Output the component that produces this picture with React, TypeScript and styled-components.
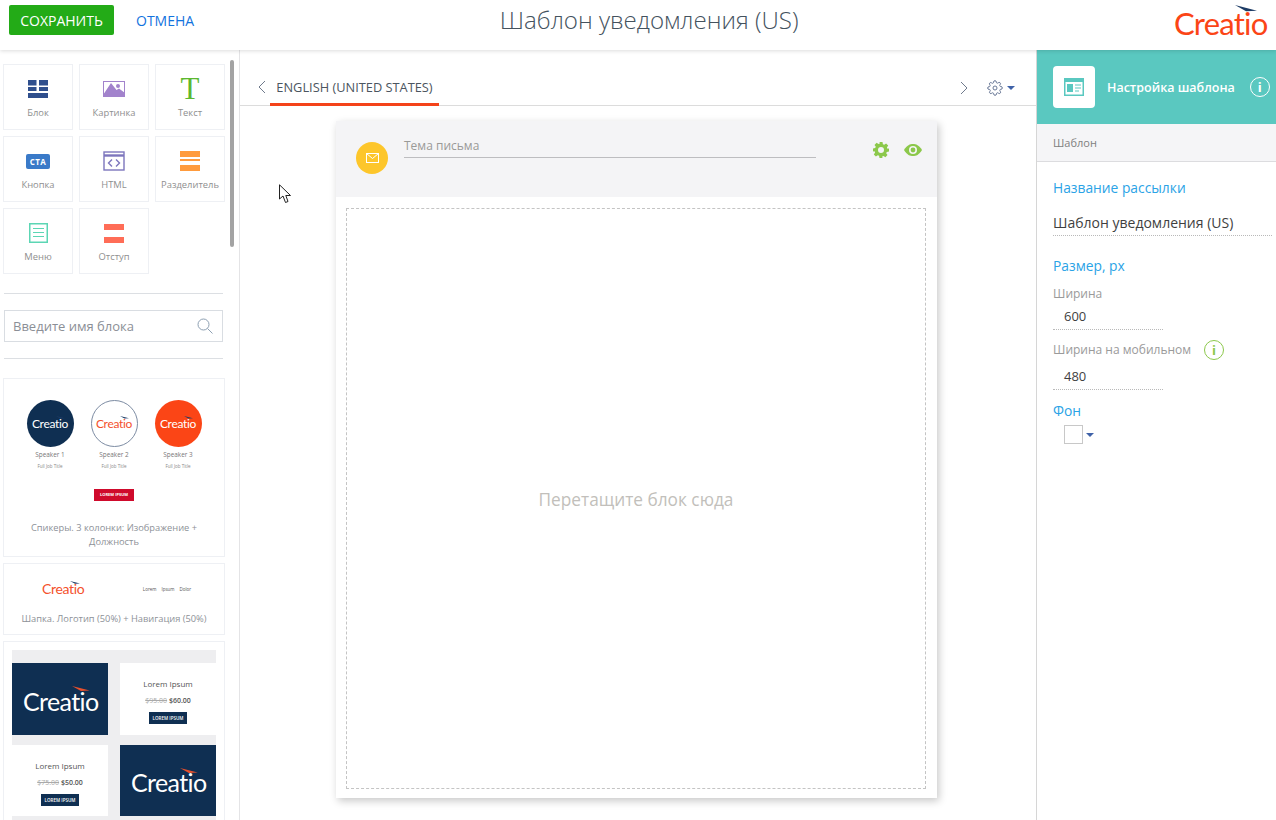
import React from 'react';
import styled, { createGlobalStyle } from 'styled-components';

const Global = createGlobalStyle`
  html, body { margin: 0; padding: 0; height: 820px; overflow: hidden; background: #fff; }
  body { font-family: "Open Sans", "Liberation Sans", sans-serif; }
  * { box-sizing: border-box; }
`;

const Page = styled.div`
  position: relative;
  width: 1276px;
  height: 820px;
  overflow: hidden;
  display: flex;
  flex-direction: column;
`;
const Header = styled.header`
  height: 50px;
  flex: none;
  display: flex;
  align-items: flex-start;
  position: relative;
  z-index: 2;
  background: #fff;
  box-shadow: 0 1px 4px rgba(0, 0, 0, 0.14);
  padding: 5px 10px 0 9px;
`;
const SaveButton = styled.button`
  width: 105px;
  height: 30px;
  border: 0;
  border-radius: 2px;
  background: #23ab17;
  color: #fff;
  font: 400 14px "Open Sans", sans-serif;
  padding: 0;
`;
const CancelButton = styled.button`
  margin-left: 22px;
  height: 30px;
  border: 0;
  background: none;
  color: #1273de;
  font: 400 14px "Open Sans", sans-serif;
  padding: 0;
`;
const Title = styled.h1`
  margin: 0;
  width: 910px;
  text-align: center;
  height: 30px;
  font: 300 24.1px/30px "Open Sans", sans-serif;
  color: #44525e;
  white-space: nowrap;
`;
const LogoWrap = styled.div`
  margin-left: auto;
  margin-top: 1px;
  flex: none;
`;
const LogoBox = styled.div<{ $w: number; $size: number; $color: string }>`
  position: relative;
  display: inline-block;
  width: ${p => p.$w}px;
  color: ${p => p.$color};
  font: 400 ${p => p.$size}px/1.1 "Lato", "Open Sans", sans-serif;
  letter-spacing: -0.025em;
  text-align: center;
  white-space: nowrap;
`;
const Swoosh = styled.svg`
  position: absolute;
  left: 66%;
  top: -4%;
  width: 24%;
  height: 28%;
`;
const Logo = ({ w, size, color, swoosh = '#1d3c66' }: { w: number; size: number; color: string; swoosh?: string }) => (
  <LogoBox $w={w} $size={size} $color={color}>
    Creatio
    <Swoosh viewBox="0 0 24 10" preserveAspectRatio="none">
      <path d="M0 0 L24 6 L12 6.5 Z" fill={swoosh} />
    </Swoosh>
  </LogoBox>
);

const Body = styled.div`
  flex: 1;
  display: flex;
  min-height: 0;
`;
const Left = styled.aside`
  width: 240px;
  flex: none;
  border-right: 1px solid #e4e4e6;
  position: relative;
  overflow: hidden;
  padding: 14px 0 0 3px;
`;
const Scrollbar = styled.div`
  position: absolute;
  left: 230px;
  top: 10px;
  width: 4px;
  height: 187px;
  border-radius: 2px;
  background: #a3a3a3;
`;
const Tiles = styled.div`
  display: grid;
  grid-template-columns: repeat(3, 70px);
  grid-auto-rows: 66px;
  gap: 6px;
`;
const Tile = styled.div`
  border: 1px solid #eef0f4;
  display: flex;
  flex-direction: column;
  align-items: center;
  padding-top: 11px;
`;
const TileIcon = styled.div`
  height: 26px;
  display: flex;
  align-items: center;
  justify-content: center;
`;
const TileLabel = styled.div`
  margin-top: 4px;
  font-size: 9.4px;
  line-height: 14px;
  color: #8f8f8f;
  white-space: nowrap;
`;
const SerifT = styled.span`
  font: 400 31px/26px "Liberation Serif", serif;
  color: #5cb82f;
`;
const CtaBadge = styled.span`
  width: 24px;
  height: 15px;
  border-radius: 2px;
  background: #3a7ac8;
  color: #fff;
  font: 700 8px/15px "Open Sans", sans-serif;
  letter-spacing: 0.5px;
  text-align: center;
`;
const Rule = styled.div<{ $top: number; $bottom: number }>`
  width: 219px;
  margin: ${p => p.$top}px 0 ${p => p.$bottom}px 1px;
  height: 1px;
  background: #dcdfe3;
`;
const Search = styled.div`
  width: 219px;
  height: 32px;
  margin-left: 1px;
  border: 1px solid #d9dde2;
  display: flex;
  align-items: center;
  justify-content: space-between;
  padding: 0 9px 0 8px;
  font-size: 13px;
  color: #8b8f96;
`;
const Card = styled.div<{ $h: number }>`
  width: 222px;
  height: ${p => p.$h}px;
  border: 1px solid #eef0f4;
  margin-bottom: 6px;
  display: flex;
  flex-direction: column;
  align-items: center;
  flex: none;
`;
const Caption = styled.div<{ $mt: number }>`
  margin-top: ${p => p.$mt}px;
  font-size: 9.3px;
  line-height: 14px;
  color: #8d9197;
  text-align: center;
`;
const Speakers = styled.div`
  display: flex;
  gap: 17px;
  margin-top: 21px;
`;
const Speaker = styled.div`
  width: 47px;
  display: flex;
  flex-direction: column;
  align-items: center;
`;
const Circle = styled.div<{ $bg: string; $ring?: boolean }>`
  width: 47px;
  height: 47px;
  border-radius: 50%;
  background: ${p => p.$bg};
  border: ${p => (p.$ring ? '1px solid #7d8ca3' : '0')};
  display: flex;
  align-items: center;
  justify-content: center;
`;
const SpeakerName = styled.div`
  margin-top: 4px;
  font-size: 6.4px;
  line-height: 7px;
  font-weight: 400;
  color: #777;
  white-space: nowrap;
`;
const SpeakerRole = styled.div`
  margin-top: 5px;
  font-size: 4.5px;
  line-height: 6px;
  color: #888;
  white-space: nowrap;
`;
const RedBtn = styled.div`
  margin-top: 20px;
  width: 40px;
  height: 12px;
  background: #cf0a2c;
  color: #fff;
  font: 700 4px/12px "Open Sans", sans-serif;
  text-align: center;
  white-space: nowrap;
`;
const HeaderThumb = styled.div`
  display: flex;
  width: 100%;
  align-items: center;
  margin-top: 15px;
  height: 20px;
`;
const ThumbHalf = styled.div`
  width: 50%;
  display: flex;
  justify-content: center;
  gap: 5px;
  padding-right: 4px;
  font-size: 4.5px;
  color: #555;
`;
const ThumbHalfLogo = styled.div`
  width: 50%;
  display: flex;
  justify-content: center;
  padding-left: 8px;
`;
const Promo = styled.div`
  width: 204px;
  background: #eeeef0;
  margin-top: 8px;
  padding: 13px 0;
  display: grid;
  grid-template-columns: 96px 96px;
  grid-auto-rows: 71.5px;
  column-gap: 12px;
  row-gap: 10px;
`;
const PromoImage = styled.div`
  background: #0f2f52;
  display: flex;
  align-items: center;
  justify-content: center;
  padding-top: 5px;
`;
const PromoText = styled.div`
  background: #fff;
  display: flex;
  flex-direction: column;
  align-items: center;
  padding-top: 15px;
`;
const PromoTitle = styled.div`
  font-size: 8px;
  line-height: 12px;
  color: #555;
`;
const PromoPrice = styled.div`
  margin-top: 6px;
  font-size: 7px;
  line-height: 10px;
  color: #555;
  font-weight: 600;
  & > s { color: #aaa; font-weight: 400; }
`;
const PromoBtn = styled.div`
  margin-top: 6px;
  width: 38px;
  height: 12px;
  background: #0f2f52;
  color: #fff;
  font: 600 4.5px/12px "Open Sans", sans-serif;
  text-align: center;
  white-space: nowrap;
`;

const Center = styled.main`
  flex: 1;
  min-width: 0;
  display: flex;
  flex-direction: column;
  align-items: flex-start;
`;
const TabBar = styled.div`
  width: 100%;
  height: 56px;
  flex: none;
  border-bottom: 1px solid #dcdcdc;
  display: flex;
  align-items: flex-end;
  padding: 0 21px 0 17px;
`;
const Chevron = styled.svg`
  flex: none;
  margin-bottom: 11px;
`;
const Tab = styled.div`
  width: 169px;
  height: 39px;
  margin: 0 0 -1px 3px;
  padding-top: 2px;
  border-bottom: 3px solid #f4431a;
  font-size: 12.8px;
  line-height: 37px;
  color: #4b5560;
  text-align: center;
  white-space: nowrap;
`;
const TabTools = styled.div`
  margin-left: auto;
  display: flex;
  align-items: center;
  margin-bottom: 9px;
`;
const ToolGap = styled.span`
  width: 18px;
`;
const Caret = styled.span<{ $ml: number }>`
  width: 0;
  height: 0;
  margin-left: ${p => p.$ml}px;
  border-left: 4.5px solid transparent;
  border-right: 4.5px solid transparent;
  border-top: 4.5px solid #3f62a8;
`;
const Sheet = styled.section`
  width: 601px;
  height: 677px;
  margin: 15px 0 0 96px;
  flex: none;
  box-shadow: 2px 3px 8px rgba(0, 0, 0, 0.22);
  background: #fff;
  display: flex;
  flex-direction: column;
`;
const SheetHead = styled.div`
  height: 76px;
  flex: none;
  background: #f4f4f6;
  display: flex;
  align-items: flex-start;
  padding: 21px 0 0 20px;
`;
const MailDot = styled.div`
  width: 32px;
  height: 32px;
  border-radius: 50%;
  background: #fdc62b;
  display: flex;
  align-items: center;
  justify-content: center;
  flex: none;
`;
const Subject = styled.div`
  width: 412px;
  height: 16px;
  margin: 0 0 0 16px;
  border-bottom: 1px solid #bdbdc0;
  font-size: 12px;
  line-height: 8px;
  color: #9a9a98;
`;
const SheetTools = styled.div`
  margin-left: 57px;
  display: flex;
  align-items: center;
  gap: 15px;
`;
const DropArea = styled.div`
  flex: 1;
  margin: 11px 11px 9px 10px;
  border: 1px dashed #c4c4c4;
  display: flex;
  align-items: center;
  justify-content: center;
  font-size: 17.25px;
  color: #c2bfbb;
  padding-top: 2px;
`;

const Right = styled.aside`
  width: 240px;
  flex: none;
  border-left: 1px solid #d6d6d6;
  display: flex;
  flex-direction: column;
`;
const PanelHead = styled.div`
  height: 74px;
  flex: none;
  background: #5ac8c0;
  display: flex;
  align-items: center;
  padding-left: 16px;
  color: #fff;
  font-size: 12.5px;
  font-weight: 600;
  white-space: nowrap;
`;
const PanelIcon = styled.div`
  width: 42px;
  height: 42px;
  border-radius: 4px;
  background: #fff;
  display: flex;
  align-items: center;
  justify-content: center;
  margin-right: 12px;
`;
const InfoRing = styled.div<{ $color: string }>`
  width: 20px;
  height: 20px;
  border-radius: 50%;
  border: 1px solid ${p => p.$color};
  color: ${p => p.$color};
  font: 700 13px/18px "Open Sans", sans-serif;
  text-align: center;
  flex: none;
`;
const HeadInfo = styled.div`
  margin-left: 15px;
`;
const SubHead = styled.div`
  height: 38px;
  flex: none;
  background: #f5f5f7;
  border-bottom: 1px solid #dcdcdf;
  padding-left: 16px;
  font-size: 11px;
  line-height: 37px;
  color: #808080;
`;
const Fields = styled.div`
  padding: 16px 0 0 16px;
  display: flex;
  flex-direction: column;
  align-items: flex-start;
`;
const Section = styled.div<{ $mt?: number }>`
  font-size: 13.8px;
  line-height: 20px;
  color: #2aa3e6;
  margin-top: ${p => p.$mt ?? 0}px;
`;
const WideValue = styled.div`
  width: 219px;
  margin-top: 15px;
  height: 23px;
  border-bottom: 1px dotted #b9b9b9;
  font-size: 14px;
  line-height: 20px;
  color: #3f3f3f;
  white-space: nowrap;
`;
const ShortValue = styled.div<{ $mt: number }>`
  width: 110px;
  margin-top: ${p => p.$mt}px;
  height: 24px;
  border-bottom: 1px dotted #b9b9b9;
  padding-left: 11px;
  font-size: 13px;
  line-height: 20px;
  color: #3f3f3f;
`;
const FieldLabel = styled.div<{ $mt: number }>`
  margin-top: ${p => p.$mt}px;
  font-size: 12px;
  line-height: 20px;
  color: #9a9a9a;
  display: flex;
  align-items: center;
  gap: 13px;
  height: 20px;
`;
const Swatch = styled.div`
  margin: 4px 0 0 11px;
  display: flex;
  align-items: center;
`;
const SwatchBox = styled.div`
  width: 19px;
  height: 19px;
  border: 1px solid #c8c8c8;
  background: #fff;
`;
const Pointer = styled.svg`
  position: absolute;
  left: 279px;
  top: 184px;
  z-index: 5;
`;

const BlockIcon = () => (
  <svg width="20" height="18" viewBox="0 0 20 18" fill="#2f4f8d">
    <rect x="0" y="0" width="8.5" height="5.5" /><rect x="11" y="0" width="9" height="5.5" />
    <rect x="0" y="7" width="8.5" height="4" /><rect x="11" y="7" width="9" height="4" />
    <rect x="0" y="13" width="20" height="5" />
  </svg>
);
const ImageIcon = () => (
  <svg width="22" height="16" viewBox="0 0 22 16">
    <rect x="0.5" y="0.5" width="21" height="15" fill="#fff" stroke="#a283cc" />
    <path d="M0 16 L0 14 L8 2 L13.5 9 L16 7.500 L22 12 L22 16Z" fill="#a283cc" />
    <circle cx="15" cy="5" r="2" fill="#a283cc" />
  </svg>
);
const HtmlIcon = () => (
  <svg width="22" height="20" viewBox="0 0 22 20" fill="none" stroke="#7d76bd" strokeWidth="1.4">
    <rect x="1" y="1" width="20" height="18" />
    <path d="M1 4.5H21" strokeWidth="2.4" />
    <path d="M9 8.5 L5.5 12 L9 15.5 M13 8.5 L16.5 12 L13 15.5" />
  </svg>
);
const SplitIcon = () => (
  <svg width="20" height="20" viewBox="0 0 20 20" fill="#ff9b3d">
    <rect width="20" height="6" /><rect y="8" width="20" height="2" /><rect y="14" width="20" height="6" />
  </svg>
);
const MenuIcon = () => (
  <svg width="19" height="20" viewBox="0 0 19 20" fill="none" stroke="#5cd6b4">
    <rect x="0.75" y="0.75" width="17.5" height="18.5" strokeWidth="1.5" />
    <path d="M4 5.5H15M4 9.5H15M4 13.5H15" strokeWidth="1.2" />
  </svg>
);
const GapIcon = () => (
  <svg width="20" height="19" viewBox="0 0 20 19" fill="#ff6d57">
    <rect width="20" height="6" /><rect y="13" width="20" height="6" />
  </svg>
);
const SearchIcon = () => (
  <svg width="16" height="16" viewBox="0 0 16 16" fill="none" stroke="#8d9fb2" strokeWidth="1">
    <circle cx="6.5" cy="6.5" r="5.5" /><path d="M10.5 10.5 L15.5 15.5" />
  </svg>
);
const GearOutline = () => (
  <svg width="16" height="16" viewBox="0 0 24 24" fill="none" stroke="#5f6f8f" strokeWidth="1.4">
    <circle cx="12" cy="12" r="3" />
    <path d="M19.4 15a1.65 1.65 0 0 0 .33 1.82l.06.06a2 2 0 1 1-2.83 2.83l-.06-.06a1.65 1.65 0 0 0-2.8 1.17V21a2 2 0 0 1-4 0v-.09A1.65 1.65 0 0 0 7.3 19.7l-.06.06a2 2 0 1 1-2.83-2.83l.06-.06a1.65 1.65 0 0 0-1.17-2.8H3a2 2 0 0 1 0-4h.09A1.65 1.65 0 0 0 4.3 7.3l-.06-.06a2 2 0 1 1 2.83-2.83l.06.06a1.65 1.65 0 0 0 2.8-1.17V3a2 2 0 0 1 4 0v.09a1.65 1.65 0 0 0 2.8 1.17l.06-.06a2 2 0 1 1 2.83 2.83l-.06.06a1.65 1.65 0 0 0 1.17 2.8H21a2 2 0 0 1 0 4h-.09a1.65 1.65 0 0 0-1.51 1z" />
  </svg>
);
const GearSolid = () => (
  <svg width="16" height="16" viewBox="0 0 16 16" fill="#8cc84b">
    <path fillRule="evenodd" d="M6.5 0h3l.4 2.2 1.3.6L13.1 1.5l2.1 2.1-1.3 1.9.6 1.3L16 6.5v3l-2.2.4-.6 1.3 1.3 1.9-2.1 2.1-1.9-1.3-1.3.6L9.5 16h-3l-.4-2.2-1.3-.6-1.9 1.3-2.1-2.1 1.3-1.9-.6-1.3L0 9.5v-3l2.2-.4.6-1.3L1.5 2.9 3.6.8l1.9 1.3 1.3-.6zM8 5a3 3 0 1 0 0 6 3 3 0 0 0 0-6z" />
  </svg>
);
const Eye = () => (
  <svg width="18" height="12" viewBox="0 0 18 12">
    <path d="M0 6 C3 1 6 0 9 0 C12 0 15 1 18 6 C15 11 12 12 9 12 C6 12 3 11 0 6Z" fill="#8cc84b" />
    <circle cx="9" cy="6" r="4" fill="#f4f4f6" />
    <circle cx="9" cy="6" r="2.4" fill="#8cc84b" />
  </svg>
);
const Mail = () => (
  <svg width="13" height="10" viewBox="0 0 13 10" fill="none" stroke="#fff">
    <rect x="0.5" y="0.5" width="12" height="9" /><path d="M0.5 0.5 L6.5 5.5 L12.5 0.5" />
  </svg>
);
const TemplateIcon = () => (
  <svg width="20" height="18" viewBox="0 0 20 18">
    <rect width="20" height="18" fill="#5ac8c0" />
    <rect x="1.5" y="4" width="17" height="12.5" fill="#fff" />
    <rect x="3" y="6" width="6" height="8" fill="#5ac8c0" />
    <path d="M11 7H17M11 10H17M11 13H15" stroke="#5ac8c0" strokeWidth="1.2" />
  </svg>
);

const tiles: [React.ReactNode, string][] = [
  [<BlockIcon />, 'Блок'],
  [<ImageIcon />, 'Картинка'],
  [<SerifT>T</SerifT>, 'Текст'],
  [<CtaBadge>CTA</CtaBadge>, 'Кнопка'],
  [<HtmlIcon />, 'HTML'],
  [<SplitIcon />, 'Разделитель'],
  [<MenuIcon />, 'Меню'],
  [<GapIcon />, 'Отступ'],
];

const speakers = [
  { name: 'Speaker 1', bg: '#0f2f52', fg: '#fff', ring: false },
  { name: 'Speaker 2', bg: '#fff', fg: '#f4512c', ring: true },
  { name: 'Speaker 3', bg: '#fb4516', fg: '#fff', ring: false },
];

const Promos = [
  { price: '$95.00', now: '$60.00' },
  { price: '$75.00', now: '$50.00' },
];

const PromoCopy = ({ price, now }: { price: string; now: string }) => (
  <PromoText>
    <PromoTitle>Lorem Ipsum</PromoTitle>
    <PromoPrice><s>{price}</s> {now}</PromoPrice>
    <PromoBtn>LOREM IPSUM</PromoBtn>
  </PromoText>
);

export default function App() {
  return (
    <Page>
      <Global />
      <Header>
        <SaveButton>СОХРАНИТЬ</SaveButton>
        <CancelButton>ОТМЕНА</CancelButton>
        <Title>Шаблон уведомления (US)</Title>
        <LogoWrap><Logo w={92} size={31} color="#fb4516" /></LogoWrap>
      </Header>
      <Body>
        <Left>
          <Scrollbar />
          <Tiles>
            {tiles.map(([icon, label]) => (
              <Tile key={label}>
                <TileIcon>{icon}</TileIcon>
                <TileLabel>{label}</TileLabel>
              </Tile>
            ))}
          </Tiles>
          <Rule $top={19} $bottom={16} />
          <Search>Введите имя блока<SearchIcon /></Search>
          <Rule $top={16} $bottom={19} />
          <Card $h={179}>
            <Speakers>
              {speakers.map(s => (
                <Speaker key={s.name}>
                  <Circle $bg={s.bg} $ring={s.ring}><Logo w={38} size={12} color={s.fg} /></Circle>
                  <SpeakerName>{s.name}</SpeakerName>
                  <SpeakerRole>Full Job Title</SpeakerRole>
                </Speaker>
              ))}
            </Speakers>
            <RedBtn>LOREM IPSUM</RedBtn>
            <Caption $mt={20}>Спикеры. 3 колонки: Изображение +<br />Должность</Caption>
          </Card>
          <Card $h={72}>
            <HeaderThumb>
              <ThumbHalfLogo><Logo w={42} size={14} color="#f4512c" /></ThumbHalfLogo>
              <ThumbHalf><span>Lorem</span><span>Ipsum</span><span>Dolor</span></ThumbHalf>
            </HeaderThumb>
            <Caption $mt={13}>Шапка. Логотип (50%) + Навигация (50%)</Caption>
          </Card>
          <Card $h={190}>
            <Promo>
              <PromoImage><Logo w={74} size={25} color="#fff" swoosh="#e8502c" /></PromoImage>
              <PromoCopy {...Promos[0]} />
              <PromoCopy {...Promos[1]} />
              <PromoImage><Logo w={74} size={25} color="#fff" swoosh="#e8502c" /></PromoImage>
            </Promo>
          </Card>
        </Left>
        <Center>
          <TabBar>
            <Chevron width="10" height="14" viewBox="0 0 10 14" fill="none" stroke="#6f7a8c"><path d="M8 1 L2 7 L8 13" /></Chevron>
            <Tab>ENGLISH (UNITED STATES)</Tab>
            <TabTools>
              <svg width="10" height="14" viewBox="0 0 10 14" fill="none" stroke="#6f7a8c"><path d="M2 1 L8 7 L2 13" /></svg>
              <ToolGap />
              <GearOutline />
              <Caret $ml={4} />
            </TabTools>
          </TabBar>
          <Sheet>
            <SheetHead>
              <MailDot><Mail /></MailDot>
              <Subject>Тема письма</Subject>
              <SheetTools><GearSolid /><Eye /></SheetTools>
            </SheetHead>
            <DropArea>Перетащите блок сюда</DropArea>
          </Sheet>
        </Center>
        <Right>
          <PanelHead>
            <PanelIcon><TemplateIcon /></PanelIcon>
            Настройка шаблона
            <HeadInfo><InfoRing $color="#fff">i</InfoRing></HeadInfo>
          </PanelHead>
          <SubHead>Шаблон</SubHead>
          <Fields>
            <Section>Название рассылки</Section>
            <WideValue>Шаблон уведомления (US)</WideValue>
            <Section $mt={20}>Размер, px</Section>
            <FieldLabel $mt={8}>Ширина</FieldLabel>
            <ShortValue $mt={2}>600</ShortValue>
            <FieldLabel $mt={10}>Ширина на мобильном<InfoRing $color="#8cc84b">i</InfoRing></FieldLabel>
            <ShortValue $mt={6}>480</ShortValue>
            <Section $mt={11}>Фон</Section>
            <Swatch><SwatchBox /><Caret $ml={3} /></Swatch>
          </Fields>
        </Right>
      </Body>
      <Pointer width="14" height="21" viewBox="0 0 14 21">
        <path d="M0.5 0.8 L0.5 15 L4 12 L6.5 18.5 L9 17.5 L6.8 11.5 L11.5 11.5 Z" fill="#fff" stroke="#222" strokeWidth="1" />
      </Pointer>
    </Page>
  );
}
